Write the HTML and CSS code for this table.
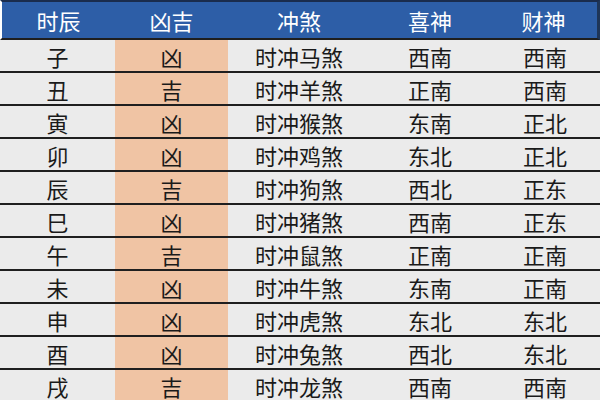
FILE: index.html
```html
<!DOCTYPE html>
<html lang="zh">
<head>
<meta charset="utf-8">
<link rel="stylesheet" href="styles.css">
</head>
<body>
<div class="table">
  <div class="row head">
    <div class="cell">时辰</div><div class="cell">凶吉</div><div class="cell">冲煞</div><div class="cell">喜神</div><div class="cell">财神</div>
  </div>
  <div class="row"><div class="cell">子</div><div class="cell luck">凶</div><div class="cell">时冲马煞</div><div class="cell">西南</div><div class="cell">西南</div></div>
  <div class="row"><div class="cell">丑</div><div class="cell luck">吉</div><div class="cell">时冲羊煞</div><div class="cell">正南</div><div class="cell">西南</div></div>
  <div class="row"><div class="cell">寅</div><div class="cell luck">凶</div><div class="cell">时冲猴煞</div><div class="cell">东南</div><div class="cell">正北</div></div>
  <div class="row"><div class="cell">卯</div><div class="cell luck">凶</div><div class="cell">时冲鸡煞</div><div class="cell">东北</div><div class="cell">正北</div></div>
  <div class="row"><div class="cell">辰</div><div class="cell luck">吉</div><div class="cell">时冲狗煞</div><div class="cell">西北</div><div class="cell">正东</div></div>
  <div class="row"><div class="cell">巳</div><div class="cell luck">凶</div><div class="cell">时冲猪煞</div><div class="cell">西南</div><div class="cell">正东</div></div>
  <div class="row"><div class="cell">午</div><div class="cell luck">吉</div><div class="cell">时冲鼠煞</div><div class="cell">正南</div><div class="cell">正南</div></div>
  <div class="row"><div class="cell">未</div><div class="cell luck">凶</div><div class="cell">时冲牛煞</div><div class="cell">东南</div><div class="cell">正南</div></div>
  <div class="row"><div class="cell">申</div><div class="cell luck">凶</div><div class="cell">时冲虎煞</div><div class="cell">东北</div><div class="cell">东北</div></div>
  <div class="row"><div class="cell">酉</div><div class="cell luck">凶</div><div class="cell">时冲兔煞</div><div class="cell">西北</div><div class="cell">东北</div></div>
  <div class="row"><div class="cell">戌</div><div class="cell luck">吉</div><div class="cell">时冲龙煞</div><div class="cell">西南</div><div class="cell">西南</div></div>
</div>
</body>
</html>
```
FILE: styles.css
```css
html, body {
  margin: 0;
  padding: 0;
  background: #ebebeb;
  overflow: hidden;
}
.table {
  width: 600px;
  height: 400px;
  overflow: hidden;
  font-family: "Noto Sans CJK SC", "Noto Sans", sans-serif;
  font-size: 22px;
  color: #1a1a1a;
}
.row {
  display: grid;
  grid-template-columns: 115px 113px 142px 120px 110px;
  height: 31px;
  border-bottom: 2px solid #1f1f1f;
}
.head {
  height: 36px;
  background: #2d5ea7;
  border-top: 2px solid #1a2c4d;
  border-left: 2px solid #ffffff;
  border-right: 3px solid #1e3558;
  grid-template-columns: 113px 113px 142px 120px 107px;
  color: #ffffff;
}
.cell {
  display: flex;
  align-items: center;
  justify-content: center;
  line-height: 1;
}
.luck {
  background: #f0c4a4;
}
```
